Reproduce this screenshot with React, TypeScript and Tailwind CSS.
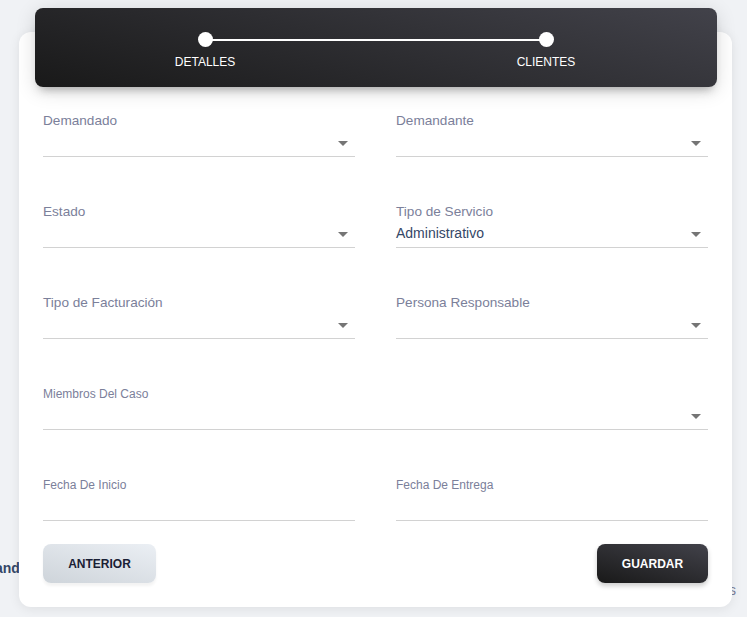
import React from 'react'

const FONT = { fontFamily: '"Liberation Sans", Arial, sans-serif' }

function Arrow() {
  return (
    <svg width="24" height="24" viewBox="0 0 24 24" className="shrink-0 text-[#757575]" fill="currentColor">
      <path d="M7 10l5 5 5-5z" />
    </svg>
  )
}

function Field({ label, value, small, select = true, className = '' }: { label: string; value?: string; small?: boolean; select?: boolean; className?: string }) {
  return (
    <div className={className}>
      <p className={`leading-4 text-[#7b809a] ${small ? 'text-[12px]' : 'text-[13.6px]'}`}>{label}</p>
      <div className="flex h-[28px] items-center justify-between border-b border-[#d2d2d2]">
        <span className="text-[14px] text-[#344767]">{value}</span>
        {select && <Arrow />}
      </div>
    </div>
  )
}

export default function App() {
  return (
    <div className="relative h-[617px] w-full overflow-hidden bg-[#f0f2f5]" style={FONT}>
      {/* content behind the card */}
      <span className="absolute left-[-5px] top-[558px] text-[14px] font-bold text-[#344767]">and</span>
      <span className="absolute left-[729px] top-[580px] text-[14px] text-[#7b809a]">s</span>

      <div className="relative z-10 ml-[19px] mt-[32px] w-[713px] rounded-xl bg-white pb-6 pl-6 pr-[24px] shadow-[0_2px_12px_rgba(0,0,0,0.08)]">
        {/* stepper */}
        <div className="relative top-[-24px] ml-[-8px] mr-[-9px] h-[79px] rounded-lg bg-[linear-gradient(195deg,#42424a,#191919)] shadow-[0_4px_20px_rgba(0,0,0,0.14),0_7px_10px_-5px_rgba(64,64,64,0.4)]">
          <div className="flex items-start pl-[170px] pr-[171px] pt-[24px]">
            <div className="flex w-0 flex-col items-center">
              <div className="h-[15px] w-[15px] shrink-0 rounded-full bg-white" />
              <span className="mt-[6px] whitespace-nowrap text-[12px] text-white">DETALLES</span>
            </div>
            <div className="mt-[6.5px] h-[2px] flex-1 bg-white" />
            <div className="flex w-0 flex-col items-center">
              <div className="h-[15px] w-[15px] shrink-0 rounded-full bg-white" />
              <span className="mt-[6px] whitespace-nowrap text-[12px] text-white">CLIENTES</span>
            </div>
          </div>
        </div>

        {/* form */}
        <div className="-mt-[24px] grid grid-cols-2 gap-x-[41px] gap-y-[47px] pt-[26px]">
          <Field label="Demandado" />
          <Field label="Demandante" />
          <Field label="Estado" />
          <Field label="Tipo de Servicio" value="Administrativo" />
          <Field label="Tipo de Facturación" />
          <Field label="Persona Responsable" />
          <Field label="Miembros Del Caso" small className="col-span-2" />
          <Field label="Fecha De Inicio" small select={false} />
          <Field label="Fecha De Entrega" small select={false} />
        </div>

        <div className="mt-[23px] flex items-center justify-between">
          <button className="h-[39px] w-[113px] rounded-lg bg-[linear-gradient(195deg,#ebeff4,#ced4da)] text-[12px] font-bold text-[#1a2035] shadow-[0_3px_3px_rgba(0,0,0,0.05)]">
            ANTERIOR
          </button>
          <button className="h-[39px] w-[111px] rounded-lg bg-[linear-gradient(195deg,#42424a,#191919)] text-[12px] font-bold text-white shadow-[0_3px_5px_rgba(0,0,0,0.2)]">
            GUARDAR
          </button>
        </div>
      </div>
    </div>
  )
}
